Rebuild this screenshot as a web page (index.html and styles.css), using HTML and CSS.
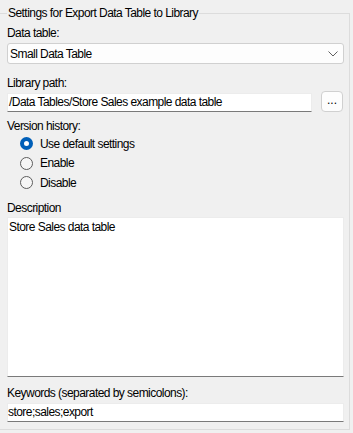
FILE: index.html
```html
<!DOCTYPE html>
<html>
<head>
<meta charset="utf-8">
<link rel="stylesheet" href="styles.css">
</head>
<body>
<fieldset class="group">
  <legend class="group-title">Settings for Export Data Table to Library</legend>
  <div class="field-label lbl-table">Data table:</div>
  <div class="combo">
    <span class="combo-text">Small Data Table</span>
    <svg class="chevron" width="10" height="6" viewBox="0 0 10 6"><path d="M0.5 0.5 L5 5 L9.5 0.5" fill="none" stroke="#606060" stroke-width="1"/></svg>
  </div>
  <div class="field-label lbl-path">Library path:</div>
  <div class="path-row">
    <div class="textbox path-box">/Data Tables/Store Sales example data table</div>
    <button class="browse">...</button>
  </div>
  <div class="field-label lbl-version">Version history:</div>
  <div class="radios">
    <div class="radio-row"><span class="radio checked"></span><span>Use default settings</span></div>
    <div class="radio-row"><span class="radio"></span><span>Enable</span></div>
    <div class="radio-row"><span class="radio"></span><span>Disable</span></div>
  </div>
  <div class="field-label lbl-desc">Description</div>
  <div class="textarea">Store Sales data table</div>
  <div class="field-label lbl-kw">Keywords (separated by semicolons):</div>
  <div class="textbox kw-box">store;sales;export</div>
</fieldset>
</body>
</html>
```
FILE: styles.css
```css
html, body {
  margin: 0;
  padding: 0;
  background: #f0f0f0;
}
body {
  font-family: "Liberation Sans", Arial, sans-serif;
  font-size: 12px;
  letter-spacing: -0.55px;
  color: #000;
  width: 353px;
  height: 433px;
  overflow: hidden;
}
.group {
  margin: 0 3px 0 0;
  padding: 0 5px 7px 7px;
  border: 1px solid #dcdcdc;
  border-left: none;
  min-width: 0;
}
.group-title {
  padding: 0 1px;
  line-height: 26px;
  height: 26px;
}
.field-label {
  line-height: 15px;
  height: 15px;
}
.lbl-table { margin-bottom: 2px; }
.lbl-path { margin-top: 12px; }
.lbl-version { margin-top: 7px; }
.lbl-desc { margin-top: 8.5px; margin-bottom: 1px; }
.lbl-kw { margin-top: 8.5px; margin-bottom: 2.5px; }

.combo {
  box-sizing: border-box;
  height: 21px;
  border: 1px solid #d0d0d0;
  border-radius: 3px;
  background: #fdfdfd;
  display: flex;
  align-items: center;
  justify-content: space-between;
  padding: 0 4px 0 2px;
}
.chevron { display: block; margin-right: 1px; }

.textbox {
  box-sizing: border-box;
  height: 19px;
  background: #fff;
  border: 1px solid #ececec;
  border-bottom-color: #7a7a7a;
  line-height: 17px;
  padding-left: 1px;
  white-space: nowrap;
  overflow: hidden;
}
.path-row {
  display: flex;
  align-items: flex-end;
  gap: 9px;
}
.path-box { flex: 1; padding-left: 1px; }
.browse {
  box-sizing: border-box;
  width: 22px;
  height: 21px;
  margin: 0 1px 0 0;
  padding: 0 0 3px;
  border: 1px solid #d0d0d0;
  border-radius: 4px;
  background: #fdfdfd;
  font-family: inherit;
  font-size: 12px;
  letter-spacing: 0;
  color: #000;
  line-height: 12px;
}
.radios {
  padding-left: 13px;
}
.radio-row {
  height: 19.5px;
  display: flex;
  align-items: center;
  gap: 7px;
}
.radio {
  box-sizing: border-box;
  width: 13px;
  height: 13px;
  border-radius: 50%;
  border: 1px solid #5c5c5c;
  background: #f6f6f6;
}
.radio.checked {
  border: 4px solid #005fb8;
  background: #fff;
}
.textarea {
  box-sizing: border-box;
  height: 160px;
  background: #fff;
  border: 1px solid #ececec;
  border-bottom-color: #7a7a7a;
  padding: 2px 0 0 1px;
  line-height: 15px;
}
.kw-box { padding-left: 0; }
```
